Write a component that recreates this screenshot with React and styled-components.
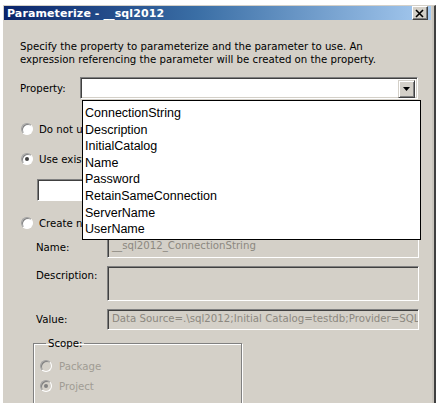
import styled, { createGlobalStyle } from 'styled-components';

const Global = createGlobalStyle`
  html, body {
    margin: 0;
    padding: 0;
    background: #ffffff;
  }
  body {
    width: 440px;
    height: 409px;
    overflow: hidden;
    font-family: "DejaVu Sans", Tahoma, sans-serif;
  }
`;

const items = [
  'ConnectionString',
  'Description',
  'InitialCatalog',
  'Name',
  'Password',
  'RetainSameConnection',
  'ServerName',
  'UserName',
];

export default function App () {
  return (
    <Page>
      <Global />
      <Window>
        <TitleBar>
          <h1>Parameterize - __sql2012</h1>
          <CloseButton>
            <svg width="10" height="9" viewBox="0 0 10 9">
              <path d="M1 1 L8 8 M8 1 L1 8" stroke="#000" strokeWidth="1.6" />
            </svg>
          </CloseButton>
        </TitleBar>
        <Body>
          <Intro>
            Specify the property to parameterize and the parameter to use. An
            expression referencing the parameter will be created on the property.
          </Intro>
          <PropertyRow>
            <Label>Property:</Label>
            <Combo>
              <DropButton>
                <svg width="7" height="4" viewBox="0 0 7 4">
                  <path d="M0 0 H7 L3.5 4 Z" fill="#000" />
                </svg>
              </DropButton>
              <DropList>
                {items.map((item) => (
                  <li key={item}>{item}</li>
                ))}
              </DropList>
            </Combo>
          </PropertyRow>
          <Choice $top={22}>
            <Radio />
            <span>Do not use parameter</span>
          </Choice>
          <Choice $top={14}>
            <Radio $checked />
            <span>Use existing parameter</span>
          </Choice>
          <ExistingBox />
          <Choice $top={14}>
            <Radio />
            <span>Create new parameter</span>
          </Choice>
          <Fields>
            <FieldLabel>Name:</FieldLabel>
            <TextBox $h={22}>__sql2012_ConnectionString</TextBox>
            <FieldLabel $top>Description:</FieldLabel>
            <TextBox $h={35} />
            <FieldLabel>Value:</FieldLabel>
            <TextBox $h={21}>
              Data Source=.\sql2012;Initial Catalog=testdb;Provider=SQLNCLI11.1;Integrated Security=SSPI;
            </TextBox>
          </Fields>
          <ScopeGroup>
            <legend>Scope:</legend>
            <ScopeOption>
              <Radio $disabled />
              <span>Package</span>
            </ScopeOption>
            <ScopeOption>
              <Radio $disabled $checked />
              <span>Project</span>
            </ScopeOption>
          </ScopeGroup>
        </Body>
      </Window>
    </Page>
  );
}

const Page = styled.main`
  width: 440px;
  height: 409px;
  padding: 5px 0 0 3px;
  box-sizing: border-box;
  background: #ffffff;
`;

const Window = styled.div`
  width: 433px;
  height: 398px;
  box-sizing: border-box;
  background: #d4d0c8;
  border-left: 1px solid #d4d0c8;
  border-top: 1px solid #d4d0c8;
  border-right: 2px solid #404040;
  box-shadow: inset -2px 0 0 #c8c4bc;
  overflow: hidden;
  display: flex;
  flex-direction: column;
`;

const TitleBar = styled.div`
  height: 18px;
  margin-right: 3px;
  display: flex;
  align-items: center;
  justify-content: space-between;
  padding: 0 3px 0 3px;
  background: linear-gradient(90deg, #0a246a 0%, #3a6ea5 45%, #a6caf0 100%);

  h1 {
    margin: 0;
    font-family: "DejaVu Sans", Tahoma, sans-serif;
    font-weight: bold;
    font-size: 11px;
    color: #ffffff;
    letter-spacing: 0.1px;
  }
`;

const CloseButton = styled.div`
  width: 16px;
  height: 14px;
  box-sizing: border-box;
  display: flex;
  align-items: center;
  justify-content: center;
  background: #d4d0c8;
  border: 1px solid;
  border-color: #ffffff #404040 #404040 #ffffff;
  box-shadow: inset -1px -1px 0 #808080;
`;

const Body = styled.div`
  flex: 1;
  padding: 20px 0 0 16px;
  display: flex;
  flex-direction: column;
  font-size: 10.2px;
  color: #000000;
`;

const Intro = styled.p`
  margin: 0;
  width: 400px;
  line-height: 13px;
`;

const PropertyRow = styled.div`
  display: flex;
  align-items: center;
  margin-top: 11px;
  height: 22px;
`;

const Label = styled.span`
  width: 60px;
`;

const Combo = styled.div`
  position: relative;
  width: 338px;
  height: 22px;
  box-sizing: border-box;
  background: #ffffff;
  border: 1px solid;
  border-color: #808080 #ffffff #ffffff #808080;
  box-shadow: inset 1px 1px 0 #404040, inset -1px -1px 0 #d4d0c8;
  display: flex;
  justify-content: flex-end;
  padding: 2px;
`;

const DropButton = styled.div`
  width: 17px;
  height: 18px;
  box-sizing: border-box;
  background: #d4d0c8;
  border: 1px solid;
  border-color: #d4d0c8 #404040 #404040 #d4d0c8;
  box-shadow: inset 1px 1px 0 #ffffff, inset -1px -1px 0 #808080;
  display: flex;
  align-items: center;
  justify-content: center;
`;

const DropList = styled.ul`
  position: absolute;
  top: 22px;
  left: 1px;
  width: 339px;
  margin: 0;
  padding: 4px 0 1px 2px;
  box-sizing: border-box;
  list-style: none;
  background: #ffffff;
  border: 1px solid #000000;
  z-index: 2;
  font-family: "Liberation Sans", Arial, sans-serif;
  font-size: 12.5px;
  color: #000000;

  li {
    height: 16.6px;
    line-height: 16.6px;
  }
`;

const Choice = styled.div`
  display: flex;
  align-items: center;
  gap: 6px;
  height: 16px;
  margin-top: ${(p) => p.$top}px;
  padding-left: 1px;
  white-space: nowrap;
`;

const Radio = styled.span`
  width: 12px;
  height: 12px;
  flex: none;
  box-sizing: border-box;
  border-radius: 50%;
  border: 1px solid;
  border-color: #a0a0a0 #ffffff #ffffff #a0a0a0;
  box-shadow: inset 1px 1px 0 #808080;
  background: ${(p) => (p.$disabled ? '#d4d0c8' : '#ffffff')};
  display: flex;
  align-items: center;
  justify-content: center;

  &::after {
    content: '';
    width: 4px;
    height: 4px;
    border-radius: 50%;
    background: ${(p) => (p.$disabled ? '#808080' : '#404040')};
    display: ${(p) => (p.$checked ? 'block' : 'none')};
  }
`;

const ExistingBox = styled.div`
  margin: 12px 0 0 17px;
  width: 340px;
  height: 22px;
  box-sizing: border-box;
  background: #ffffff;
  border: 1px solid;
  border-color: #808080 #ffffff #ffffff #808080;
  box-shadow: inset 1px 1px 0 #404040;
`;

const Fields = styled.div`
  display: grid;
  grid-template-columns: 71px 312px;
  row-gap: 8px;
  margin: 5px 0 0 16px;
  align-items: center;
`;

const FieldLabel = styled.span`
  align-self: ${(p) => (p.$top ? 'start' : 'center')};
  padding-top: ${(p) => (p.$top ? '4px' : '0')};
`;

const TextBox = styled.div`
  height: ${(p) => p.$h}px;
  box-sizing: border-box;
  padding: 3px 4px 0;
  background: #d4d0c8;
  color: #8c8880;
  border: 1px solid;
  border-color: #808080 #ffffff #ffffff #808080;
  box-shadow: inset 1px 1px 0 #404040;
  white-space: nowrap;
  overflow: hidden;
`;

const ScopeGroup = styled.fieldset`
  margin: 8px 0 0 13px;
  width: 209px;
  height: 80px;
  box-sizing: border-box;
  padding: 10px 6px 0;
  border: 1px solid #808080;
  box-shadow: 1px 1px 0 #ffffff, inset 1px 1px 0 #ffffff;
  display: flex;
  flex-direction: column;
  gap: 6px;

  legend {
    padding: 0 2px;
    margin-left: 6px;
    color: #000000;
  }
`;

const ScopeOption = styled.div`
  display: flex;
  align-items: center;
  gap: 7px;
  height: 14px;
  color: #a09c94;
`;
